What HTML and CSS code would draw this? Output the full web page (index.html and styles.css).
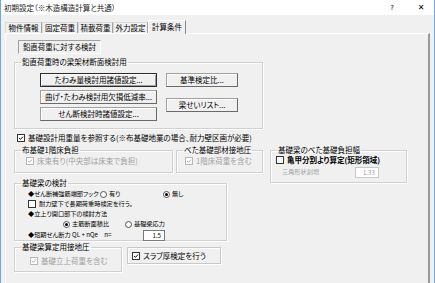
FILE: index.html
```html
<!DOCTYPE html>
<html lang="ja">
<head>
  <meta charset="UTF-8">
  <title>初期設定</title>
  <link rel="stylesheet" href="styles.css">
</head>
<body>
  <div class="window">
    <div class="titlebar">
      <span class="title">初期設定（※木造構造計算と共通）</span>
      <span class="help">?</span>
      <span class="close">✕</span>
    </div>
    <div class="client">
      <div class="tabs">
        <div class="tab w37">物件情報</div>
        <div class="tab w36">固定荷重</div>
        <div class="tab w35">積載荷重</div>
        <div class="tab w35">外力設定</div>
        <div class="tab on">計算条件</div>
      </div>
      <div class="panel">
        <div class="caption">鉛直荷重に対する検討</div>

        <fieldset class="grp g-beam">
          <legend>鉛直荷重時の梁架材断面検討用</legend>
          <div class="btn-area">
            <div class="btn-col left">
              <div class="btn default">たわみ量検討用諸値設定...</div>
              <div class="btn">曲げ・たわみ検討用欠損低減率...</div>
              <div class="btn">せん断検討時諸値設定...</div>
            </div>
            <div class="btn-col right">
              <div class="btn">基準検定比...</div>
              <div class="btn">梁せいリスト...</div>
            </div>
          </div>
        </fieldset>

        <div class="row check-main">
          <span class="cb"><svg viewBox="0 0 8 8"><path d="M1.5 4l1.8 1.8L6.6 2.2"/></svg></span>
          <span>基礎設計用重量を参照する(※布基礎地業の場合、耐力壁区画が必要)</span>
        </div>

        <div class="lower">
          <div class="lower-left">
            <div class="pair">
              <fieldset class="grp g-nuno">
                <legend>布基礎1階床負担</legend>
                <div class="row off ind-11">
                  <span class="cb dis"><svg viewBox="0 0 8 8"><path d="M1.5 4l1.8 1.8L6.6 2.2"/></svg></span>
                  <span>床束有り(中央部は床束で負担)</span>
                </div>
              </fieldset>
              <fieldset class="grp g-beta">
                <legend>べた基礎部材接地圧</legend>
                <div class="row off ind-8">
                  <span class="cb dis"><svg viewBox="0 0 8 8"><path d="M1.5 4l1.8 1.8L6.6 2.2"/></svg></span>
                  <span>1階床荷重を含む</span>
                </div>
              </fieldset>
            </div>

            <fieldset class="grp g-kiso">
              <legend>基礎梁の検討</legend>
              <div class="kiso-body">
                <div class="row">
                  <span class="lbl-hook">◆せん断補強筋端部フック</span>
                  <span class="rb"></span><span class="opt-ari">有り</span>
                  <span class="rb on"></span><span>無し</span>
                </div>
                <div class="row">
                  <span class="cb"></span>
                  <span>耐力壁下で長期荷重時検定を行う。</span>
                </div>
                <div class="row">◆立上り開口部下の検討方法</div>
                <div class="row ind-35">
                  <span class="rb on"></span><span class="opt-main">主筋断面積比</span>
                  <span class="rb"></span><span>基礎梁応力</span>
                </div>
                <div class="row row-n">
                  <span class="lbl-q">◆短期せん断力 QL + nQe　n=</span>
                  <span class="num">1.5</span>
                </div>
              </div>
            </fieldset>

            <div class="pair">
              <fieldset class="grp g-santei">
                <legend>基礎梁算定用接地圧</legend>
                <div class="row off ind-15">
                  <span class="cb dis"><svg viewBox="0 0 8 8"><path d="M1.5 4l1.8 1.8L6.6 2.2"/></svg></span>
                  <span>基礎立上荷重を含む</span>
                </div>
              </fieldset>
              <div class="slab">
                <span class="cb"><svg viewBox="0 0 8 8"><path d="M1.5 4l1.8 1.8L6.6 2.2"/></svg></span>
                <span>スラブ厚検定を行う</span>
              </div>
            </div>
          </div>

          <fieldset class="grp g-haba">
            <legend>基礎梁のべた基礎負担幅</legend>
            <div class="row ind-5">
              <span class="cb"></span>
              <span class="bold">亀甲分割より算定(矩形領域)</span>
            </div>
            <div class="row off row-tri">
              <span class="lbl-tri">三角形状割増</span>
              <span class="num dis">1.33</span>
            </div>
          </fieldset>
        </div>
      </div>
    </div>
  </div>
</body>
</html>
```

FILE: styles.css
```css
* { box-sizing: border-box; }
body {
  margin: 0;
  background: #f0f0f0;
  font-family: "Noto Sans CJK JP", "Noto Sans", sans-serif;
  font-size: 7.5px;
  font-feature-settings: "palt";
  color: #000;
  overflow: hidden;
}
.window {
  width: 435px;
  height: 283px;
  border-left: 1px solid #6fa9e4;
  border-right: 1px solid #6fa9e4;
  background: #f0f0f0;
  overflow: hidden;
}
.titlebar {
  height: 15px;
  background: #fff;
  display: flex;
  align-items: center;
  padding-left: 3px;
  line-height: 10px;
}
.title { flex: 1; color: #222; }
.help { width: 8px; margin-right: 20px; text-align: center; font-family: "DejaVu Sans", sans-serif; font-size: 7px; }
.close { width: 10px; margin-right: 8px; text-align: center; font-family: "DejaVu Sans", sans-serif; font-size: 8px; }

.client { padding: 5px 4px 0 4px; }
.tabs { display: flex; align-items: flex-end; height: 13px; }
.tab {
  height: 11px;
  line-height: 10px;
  text-align: center;
  border: 1px solid #d9d9d9;
  border-bottom: none;
  border-right-color: #a0a0a0;
  background: #f0f0f0;
}
.w37 { width: 37px; }
.w36 { width: 36px; }
.w35 { width: 35px; }
.tab.on {
  width: 38px;
  height: 14px;
  margin-bottom: -1px;
  line-height: 11px;
  position: relative;
  border-color: #fff #8a8a8a #f0f0f0 #fff;
}
.panel {
  height: 262px;
  border: 1px solid #fff;
  border-right: 2px solid #9a9a9a;
  border-bottom-color: #9a9a9a;
  padding: 6px 0 0 8px;
}

.caption {
  width: 83px;
  height: 14px;
  margin-left: 4px;
  line-height: 12px;
  text-align: center;
  border: 1px solid;
  border-color: #a0a0a0 #fff #fff #a0a0a0;
}

.grp {
  margin: 0;
  padding: 0;
  min-width: 0;
  border: 1px solid #d0d0d0;
  box-shadow: inset 1px 1px #fff, 1px 1px #fff;
}
.grp legend {
  margin-left: 6px;
  padding: 0 1px;
  line-height: 10px;
}
.g-beam { width: 249px; height: 72px; margin-top: 3px; }

.btn-area { display: flex; gap: 9px; padding: 6px 0 0 25px; }
.btn-col { display: flex; flex-direction: column; }
.btn-col.left { width: 117px; gap: 3px; }
.btn-col.right { width: 72px; gap: 11px; }
.btn {
  height: 14px;
  line-height: 12px;
  text-align: center;
  border: 1px solid #a0a0a0;
  border-right-color: #696969;
  border-bottom-color: #696969;
  box-shadow: inset 1px 1px #fff;
  background: #f0f0f0;
}
.btn.default {
  border: 1px solid #2b2b2b;
  box-shadow: inset 1px 1px #fff, inset -1px -1px #a0a0a0;
}

.row {
  display: flex;
  align-items: center;
  height: 10px;
  line-height: 10px;
  white-space: nowrap;
}
.off { color: #a0a0a0; }
.bold { font-weight: bold; }
.check-main { margin-top: 4px; padding-left: 3px; }
.ind-5 { padding-left: 5px; }
.ind-8 { padding-left: 8px; margin-top: 1px; }
.ind-11 { padding-left: 11px; margin-top: 1px; }
.ind-15 { padding-left: 15px; margin-top: 4px; }
.ind-35 { padding-left: 35px; }

.cb {
  width: 8px;
  height: 8px;
  margin-right: 3px;
  flex: none;
  border: 1px solid #333;
  background: #fff;
  display: flex;
}
.cb svg { width: 6px; height: 6px; }
.cb path { fill: none; stroke: #000; stroke-width: 1.3; }
.cb.dis { border-color: #b8b8b8; }
.cb.dis path { stroke: #a8a8a8; }

.rb {
  width: 7px;
  height: 7px;
  margin-right: 2px;
  flex: none;
  border-radius: 50%;
  border: 1px solid #555;
  background: #fff;
  display: flex;
  align-items: center;
  justify-content: center;
}
.rb.on::after {
  content: "";
  width: 3px;
  height: 3px;
  border-radius: 50%;
  background: #000;
}

.lower { display: flex; align-items: flex-start; margin-top: 2px; }
.lower-left { width: 249px; }
.pair { display: flex; align-items: flex-start; }
.g-nuno { width: 159px; height: 28px; }
.g-beta { width: 87px; height: 28px; margin-left: 3px; }
.g-kiso { width: 213px; height: 63px; margin-top: 5px; }
.kiso-body { padding: 1px 0 0 13px; font-size: 6.2px; }
.lbl-hook { width: 72px; }
.opt-ari { width: 54px; }
.opt-main { width: 53px; }
.lbl-q { width: 115px; }
.row-n { height: 12px; }

.num {
  width: 22px;
  height: 11px;
  line-height: 9px;
  padding-right: 3px;
  text-align: right;
  border: 1px solid #7a7a7a;
  background: #fff;
}
.num.dis { width: 24px; border-color: #c8c8c8; color: #a0a0a0; }

.g-santei { width: 108px; height: 30px; margin-top: 1px; }
.slab {
  width: 94px;
  height: 17px;
  margin: 6px 0 0 5px;
  padding-left: 4px;
  display: flex;
  align-items: center;
  border: 1px solid #c8c8c8;
  box-shadow: inset 1px 1px #fff, 1px 1px #fff;
}

.g-haba { width: 137px; height: 38px; margin-left: 7px; }
.row-tri { margin-top: 2px; font-size: 6.2px; }
.lbl-tri { width: 84px; padding-left: 11px; }
```
